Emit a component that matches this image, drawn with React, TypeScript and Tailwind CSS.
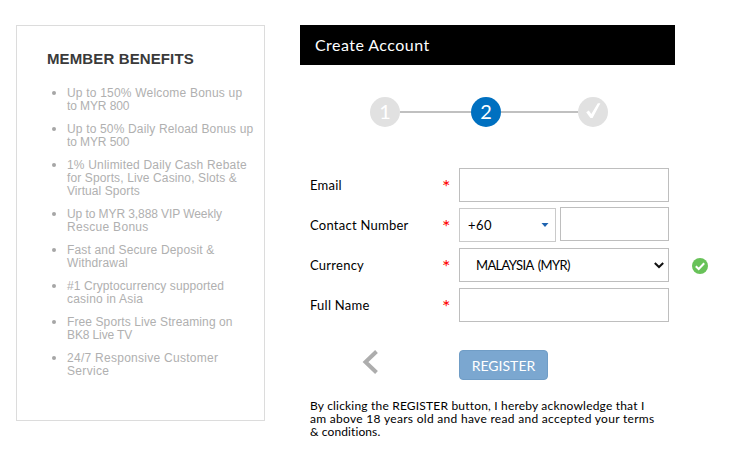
const benefits = [
    [
        { text: "Up to 150% Welcome Bonus up", spacing: "tracking-[0.2px]" },
        { text: "to MYR 800", spacing: "tracking-[-0.1px]" },
    ],
    [
        { text: "Up to 50% Daily Reload Bonus up", spacing: "tracking-[0.16px]" },
        { text: "to MYR 500", spacing: "tracking-[-0.1px]" },
    ],
    [
        { text: "1% Unlimited Daily Cash Rebate", spacing: "tracking-[0.19px]" },
        { text: "for Sports, Live Casino, Slots &", spacing: "tracking-[0.12px]" },
        { text: "Virtual Sports", spacing: "tracking-[0.08px]" },
    ],
    [
        { text: "Up to MYR 3,888 VIP Weekly", spacing: "tracking-[-0.08px]" },
        { text: "Rescue Bonus", spacing: "tracking-[0.3px]" },
    ],
    [
        { text: "Fast and Secure Deposit &", spacing: "tracking-[0.16px]" },
        { text: "Withdrawal", spacing: "tracking-[0.14px]" },
    ],
    [
        { text: "#1 Cryptocurrency supported", spacing: "tracking-[0.08px]" },
        { text: "casino in Asia", spacing: "tracking-[0.2px]" },
    ],
    [
        { text: "Free Sports Live Streaming on", spacing: "tracking-[0.1px]" },
        { text: "BK8 Live TV", spacing: "tracking-[-0.12px]" },
    ],
    [
        { text: "24/7 Responsive Customer", spacing: "tracking-[0.27px]" },
        { text: "Service", spacing: "tracking-[0.32px]" },
    ],
];

const MemberBenefits = () => {
    return (
        <aside className="h-[396px] w-[249px] shrink-0 border border-[#dcdcdc] pt-[24px] pl-[30px] font-['Liberation_Sans',sans-serif]">
            <h2 className="text-[15px] leading-[18px] font-bold tracking-[0.12px] whitespace-nowrap text-[#3a3a3a]">MEMBER BENEFITS</h2>
            <ul className="mt-[19px] flex flex-col gap-[10px] text-[12px] leading-[13px] text-[#b0b0b0]">
                {benefits.map((lines) => (
                    <li key={lines[0].text} className="flex">
                        <span className="mt-[4px] mr-[11px] ml-[5px] size-[4px] shrink-0 rounded-full bg-[#a6a6a6]" />
                        <div className="whitespace-nowrap">
                            {lines.map((line) => (
                                <div key={line.text} className={line.spacing}>{line.text}</div>
                            ))}
                        </div>
                    </li>
                ))}
            </ul>
        </aside>
    );
}

const Steps = () => {
    return (
        <div className="mt-[32px] ml-[70px] flex h-[30px] items-center text-[20px] leading-[28px] text-white">
            <div className="size-[30px] rounded-full bg-[#e1e1e1] text-center">1</div>
            <div className="h-[2px] w-[71px] bg-[#c0c0c0]" />
            <div className="size-[30px] rounded-full bg-[#0070c0] text-center">2</div>
            <div className="h-[2px] w-[77px] bg-[#c0c0c0]" />
            <div className="size-[30px] rounded-full bg-[#e1e1e1]">
                <svg viewBox="0 0 30 30" className="size-[30px]" fill="#fff">
                    <path d="M8.2 15.2L10.8 13.4L13.3 17L19.8 6.2L22.4 6.2L14.6 21L12.4 21Z" />
                </svg>
            </div>
        </div>
    );
}

type RowProps = {
    label: string;
    children: React.ReactNode;
}
const FormRow = (props: RowProps) => {
    return (
        <div className="flex h-[34px]">
            <label className="w-[132px] text-[13px] leading-[34px] tracking-[0.25px] whitespace-nowrap">{props.label}</label>
            <span className="w-[17px] text-[20px] leading-[36px] text-[#f00]">*</span>
            {props.children}
        </div>
    );
}

const App = () => {
    return (
        <div className="flex h-[451px] w-[734px] items-start overflow-hidden bg-white pt-[25px] pl-[16px] font-[Lato,sans-serif] text-black [font-variant-ligatures:none]">
            <MemberBenefits />
            <main className="ml-[35px] w-[420px]">
                <h1 className="h-[40px] w-[375px] bg-black pl-[15px] text-[16px] leading-[39px] tracking-[0.45px] text-white">Create Account</h1>
                <Steps />
                <form className="mt-[41px] ml-[10px] flex flex-col gap-[6px]">
                    <FormRow label="Email">
                        <input className="w-[210px] border border-[#bebebe] px-2 outline-none" />
                    </FormRow>
                    <FormRow label="Contact Number">
                        <div className="flex w-[97px] items-center justify-between border border-[#cacaca] pr-[6px] pl-[8px] text-[13px] tracking-[0.5px]">
                            <span className="pt-[2px]">+60</span>
                            <svg viewBox="0 0 8 4" className="h-[4px] w-[8px]" fill="#1e63b0">
                                <path d="M0.5 0h7L4 4z" />
                            </svg>
                        </div>
                        <input className="-mt-px ml-[4px] h-[34px] w-[109px] border border-[#bebebe] px-2 outline-none" />
                    </FormRow>
                    <FormRow label="Currency">
                        <div className="flex w-[210px] items-center justify-between border border-[#bebebe] pr-[4px] pl-[16px] text-[13px] tracking-[-0.65px] [word-spacing:2px]">
                            <span className="pt-px">MALAYSIA (MYR)</span>
                            <svg viewBox="0 0 10 7" className="h-[7px] w-[10px]" fill="none" stroke="#111" strokeWidth="2">
                                <path d="M0.8 1L5 5L9.2 1" />
                            </svg>
                        </div>
                        <svg viewBox="0 0 16 16" className="mt-[10px] ml-[23px] size-[16px]">
                            <circle cx="8" cy="8" r="8" fill="#68c259" />
                            <path d="M3.8 8.2L6.7 11L12.2 5.3" fill="none" stroke="#fff" strokeWidth="2" />
                        </svg>
                    </FormRow>
                    <FormRow label="Full Name">
                        <input className="w-[210px] border border-[#bebebe] px-2 outline-none" />
                    </FormRow>
                </form>
                <div className="mt-[28px] flex pl-[62px]">
                    <svg viewBox="0 0 16 24" className="h-[24px] w-[16px]" fill="none" stroke="#adadad" strokeWidth="4">
                        <path d="M14.5 1.5L3.5 12L14.5 22.5" />
                    </svg>
                    <button className="ml-[81px] h-[30px] w-[89px] rounded-[4px] border border-[#709dc6] bg-[#7ba7d0] pt-px text-[14px] leading-none text-white">REGISTER</button>
                </div>
                <div className="mt-[19px] ml-[10px] text-[12px] leading-[13px] whitespace-nowrap">
                    <div className="tracking-[0.19px]">By clicking the REGISTER button, I hereby acknowledge that I</div>
                    <div className="tracking-[0.3px]">am above 18 years old and have read and accepted your terms</div>
                    <div className="tracking-[0.1px]">&amp; conditions.</div>
                </div>
            </main>
        </div>
    );
}

export default App;
